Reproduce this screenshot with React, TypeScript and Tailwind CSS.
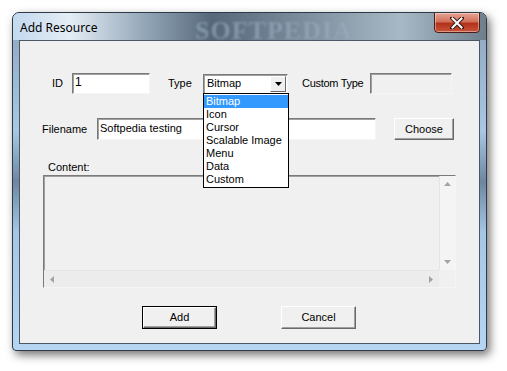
import React from "react";

const items = ["Bitmap", "Icon", "Cursor", "Scalable Image", "Menu", "Data", "Custom"];

const sunken =
  "border border-t-[#7a7a7a] border-l-[#7a7a7a] border-b-[#f5f5f5] border-r-[#f5f5f5] shadow-[inset_1px_1px_0_#a0a0a0]";

const raised =
  "border border-t-white border-l-white border-b-[#696969] border-r-[#696969] shadow-[inset_-1px_-1px_0_#a0a0a0]";

const Button = ({ label, def }: { label: string; def?: boolean }) => (
  <div className={`w-[75px] h-[23px] ${def ? "border border-black" : ""} bg-[#f0f0f0]`}>
    <div className={`w-full h-full flex items-center justify-center ${raised} text-[11px] text-black`}>
      {label}
    </div>
  </div>
);

const App = () => {
  return (
    <div
      className="w-[507px] h-[371px] bg-white pl-[12px] pt-[12px] overflow-hidden"
      style={{ fontFamily: '"Liberation Sans", Arial, sans-serif' }}
    >
      {/* Window frame */}
      <div className="w-[475px] h-[339px] rounded-t-[7px] rounded-b-[4px] border border-[#2e3a46] shadow-[3px_4px_10px_rgba(0,0,0,0.55)] bg-[linear-gradient(180deg,#8da5bb_0%,#a9c7e4_35%,#6d879f_50%,#a6c6e6_65%,#b6d5f3_100%)] flex flex-col overflow-hidden">
        {/* Title bar */}
        <div className="h-[27px] flex items-start relative bg-[linear-gradient(90deg,#c3d9ee_0%,#e4edf5_12%,#93a6b8_28%,#56677a_42%,#7d8e9e_62%,#a7b8c6_82%,#6e7e8c_100%)]">
          <div
            className="absolute left-[182px] top-[-2px] text-[26px] font-bold tracking-[1px] text-[#9aaec0] opacity-60 blur-[1px] pointer-events-none whitespace-nowrap"
            style={{ fontFamily: '"Liberation Serif", serif' }}
          >
            SOFTPEDIA
          </div>
          <span className="relative ml-[7px] mt-[6px] text-[12px] text-black" style={{ fontFamily: '"Noto Sans", sans-serif' }}>
            Add Resource
          </span>
          <div className="relative ml-auto mr-[6px] -mt-px w-[46px] h-[21px] rounded-b-[4px] border border-[#4b1d16] bg-[linear-gradient(180deg,#e8a493_0%,#d1715b_45%,#b2321b_55%,#c9533a_100%)] flex items-center justify-center shadow-[inset_0_0_0_1px_rgba(255,255,255,0.4)]">
            <svg width="14" height="12" viewBox="0 0 14 12">
              <path d="M2 1 L12 11 M12 1 L2 11" stroke="#3a1a14" strokeWidth="4" strokeLinecap="square" />
              <path d="M2.5 1.5 L11.5 10.5 M11.5 1.5 L2.5 10.5" stroke="#fff" strokeWidth="2" strokeLinecap="square" />
            </svg>
          </div>
        </div>

        {/* Client area */}
        <div className="mx-[6px] w-[461px] h-[304px] border border-[#4a5866] bg-[#f0f0f0] text-[11px] text-black">
          {/* Row 1 */}
          <div className="flex items-center mt-[32px] h-[21px]">
            <span className="ml-[32px] w-[20px]">ID</span>
            <div className={`w-[78px] h-[21px] bg-white ${sunken} px-[2px] leading-[17px] text-[12px]`}>1</div>
            <span className="ml-[18px] w-[35px]">Type</span>
            <div className="relative">
              <div className={`w-[85px] h-[20px] bg-white ${sunken} flex items-center`}>
                <span className="pl-[3px] flex-1">Bitmap</span>
                <div className="w-[16px] h-[16px] mr-px bg-[#f0f0f0] border border-t-white border-l-white border-b-[#696969] border-r-[#696969] flex items-center justify-center">
                  <svg width="7" height="4" viewBox="0 0 7 4">
                    <path d="M0 0 H7 L3.5 4 Z" fill="#000" />
                  </svg>
                </div>
              </div>
              {/* Dropdown list */}
              <div className="absolute left-0 top-[19px] w-[86px] bg-white border border-black z-10 py-px">
                {items.map((it, i) => (
                  <div
                    key={it}
                    className={`h-[13px] leading-[13px] pl-[2px] whitespace-nowrap ${i === 0 ? "bg-[#3399ff] text-white" : ""}`}
                  >
                    {it}
                  </div>
                ))}
              </div>
            </div>
            <span className="ml-[14px] w-[68px] whitespace-nowrap tracking-[-0.3px]">Custom Type</span>
            <div className={`w-[82px] h-[21px] bg-[#f0f0f0] ${sunken}`} />
          </div>

          {/* Row 2 */}
          <div className="flex items-center mt-[24px] h-[22px]">
            <span className="ml-[22px] w-[55px]">Filename</span>
            <div className={`w-[279px] h-[22px] bg-white ${sunken} px-[2px] leading-[18px]`}>
              Softpedia testing
            </div>
            <div className={`ml-[18px] w-[60px] h-[22px] flex items-center justify-center ${raised}`}>
              Choose
            </div>
          </div>

          {/* Content */}
          <div className="ml-[28px] mt-[20px] leading-[14px]">Content:</div>
          <div className={`ml-[23px] mt-[1px] w-[413px] h-[113px] bg-[#f0f0f0] ${sunken} flex flex-col`}>
            <div className="flex flex-1">
              <div className="flex-1" />
              <div className="w-[16px] bg-[#f4f4f4] border-l border-[#e4e4e4] flex flex-col items-center justify-between py-[6px]">
                <svg width="7" height="4" viewBox="0 0 7 4">
                  <path d="M3.5 0 L7 4 H0 Z" fill="#a3a3a3" />
                </svg>
                <svg width="7" height="4" viewBox="0 0 7 4">
                  <path d="M0 0 H7 L3.5 4 Z" fill="#a3a3a3" />
                </svg>
              </div>
            </div>
            <div className="flex h-[17px]">
              <div className="flex-1 bg-[#ececec] border-t border-[#e4e4e4] flex items-center justify-between px-[6px]">
                <svg width="4" height="7" viewBox="0 0 4 7">
                  <path d="M4 0 V7 L0 3.5 Z" fill="#a3a3a3" />
                </svg>
                <svg width="4" height="7" viewBox="0 0 4 7">
                  <path d="M0 0 V7 L4 3.5 Z" fill="#a3a3a3" />
                </svg>
              </div>
              <div className="w-[16px] bg-[#f0f0f0]" />
            </div>
          </div>

          {/* Buttons */}
          <div className="flex mt-[18px] ml-[122px] gap-[64px]">
            <Button label="Add" def />
            <Button label="Cancel" />
          </div>
        </div>
      </div>
    </div>
  );
};

export default App;
